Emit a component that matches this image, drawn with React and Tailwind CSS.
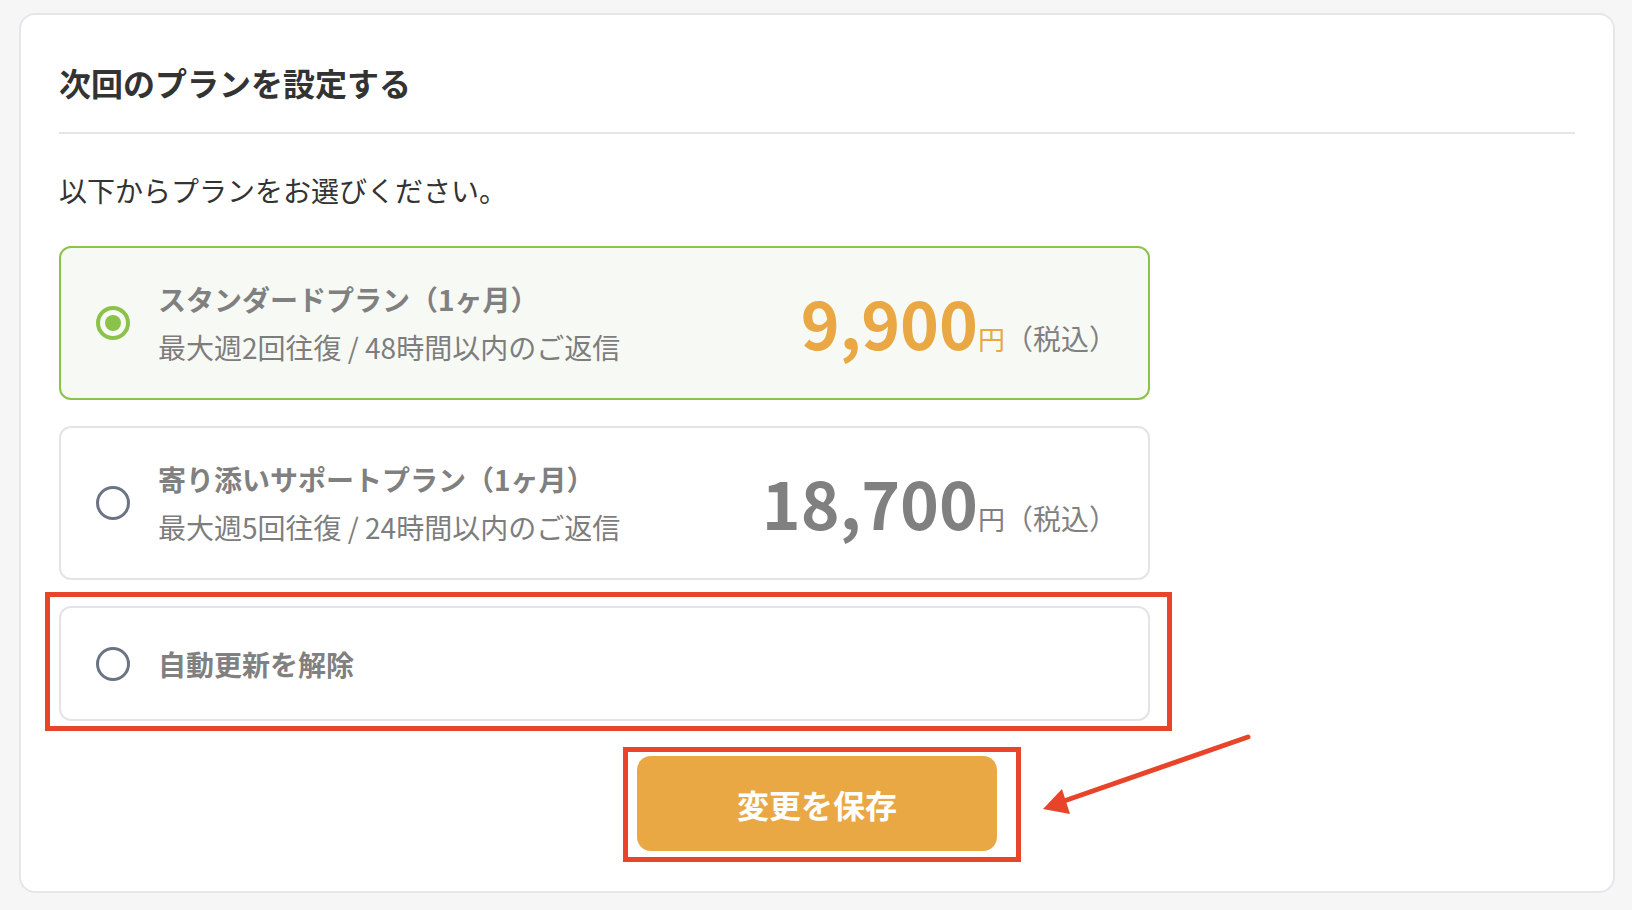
import React, { useState } from 'react';

const plans = [
  {
    id: 'standard',
    title: 'スタンダードプラン（1ヶ月）',
    desc: '最大週2回往復 / 48時間以内のご返信',
    price: '9,900',
  },
  {
    id: 'support',
    title: '寄り添いサポートプラン（1ヶ月）',
    desc: '最大週5回往復 / 24時間以内のご返信',
    price: '18,700',
  },
];

function Radio({ checked }) {
  if (checked) {
    return (
      <span className="flex h-[34px] w-[34px] shrink-0 items-center justify-center rounded-full border-[4px] border-[#8bc34a]">
        <span className="h-[16px] w-[16px] rounded-full bg-[#8bc34a]" />
      </span>
    );
  }
  return <span className="h-[34px] w-[34px] shrink-0 rounded-full border-[3px] border-[#6b7385]" />;
}

function App() {
  const [selected, setSelected] = useState('standard');

  return (
    <div
      className="min-h-screen bg-[#f6f6f6] pl-[19px] pr-[17px] pt-[13px] pb-[19px]"
      style={{ fontFamily: '"Noto Sans CJK JP", "Noto Sans", sans-serif' }}
    >
      <div className="rounded-[16px] border-2 border-[#e6e6ea] bg-white px-[38px] pt-[43px] pb-[40px]">
        <h2 className="text-[32px] font-bold leading-[48px] text-[#333333]">次回のプランを設定する</h2>
        <div className="mt-[26px] h-[2px] bg-[#e6e6ea]" />
        <p className="mt-[32px] text-[28px] leading-[48px] text-[#333333]">以下からプランをお選びください。</p>

        <div className="mt-[32px] flex flex-col gap-[26px]">
          {plans.map((plan) => {
            const active = selected === plan.id;
            return (
              <div
                key={plan.id}
                onClick={() => setSelected(plan.id)}
                className={
                  active
                    ? 'flex h-[154px] w-[1091px] cursor-pointer items-center rounded-[12px] border-2 border-[#8bc34a] bg-[#f7f9f4] pl-[35px] pr-[31px]'
                    : 'flex h-[154px] w-[1091px] cursor-pointer items-center rounded-[12px] border-2 border-[#e4e4e8] bg-white pl-[35px] pr-[31px]'
                }
              >
                <Radio checked={active} />
                <div className="ml-[28px] flex flex-col">
                  <span className="text-[28px] font-bold leading-[48px] text-[#808080]">{plan.title}</span>
                  <span className="text-[28px] leading-[48px] text-[#7d7d7d]">{plan.desc}</span>
                </div>
                <div className="ml-auto flex items-baseline pt-[1px]">
                  <span
                    className={
                      active
                        ? 'text-[66px] font-bold leading-none text-[#e9a843]'
                        : 'text-[66px] font-bold leading-none text-[#808080]'
                    }
                  >
                    {plan.price}
                  </span>
                  <span className={active ? 'text-[27px] text-[#e9a843]' : 'text-[27px] text-[#808080]'}>円</span>
                  <span className="text-[28px] text-[#808080]">（税込）</span>
                </div>
              </div>
            );
          })}

          <div className="relative w-[1091px]">
            <div
              onClick={() => setSelected('cancel')}
              className="flex h-[115px] cursor-pointer items-center rounded-[12px] border-2 border-[#e4e4e8] bg-white pl-[35px]"
            >
              <Radio checked={selected === 'cancel'} />
              <span className="ml-[28px] text-[28px] font-bold leading-[48px] text-[#808080]">自動更新を解除</span>
            </div>
            <div className="pointer-events-none absolute -left-[14px] -top-[14px] -right-[22px] -bottom-[10px] border-[5px] border-[#e8442a]" />
          </div>
        </div>

        <div className="relative mt-[35px] flex justify-center">
          <div className="relative">
            <button className="flex h-[95px] w-[360px] items-center justify-center rounded-[14px] bg-[#e9a844] text-[32px] font-bold text-white">
              変更を保存
            </button>
            <div className="pointer-events-none absolute -left-[14px] -top-[9px] -right-[24px] -bottom-[11px] border-[5px] border-[#e8442a]" />
          </div>
          <svg
            className="pointer-events-none absolute left-[971px] -top-[29px]"
            width="230"
            height="95"
            viewBox="0 0 230 95"
          >
            <line x1="218" y1="10" x2="34" y2="74" stroke="#e8442a" strokeWidth="5" strokeLinecap="round" />
            <polygon points="13,82 32,62 40,87" fill="#e8442a" />
          </svg>
        </div>
      </div>
    </div>
  );
}

export default App;
